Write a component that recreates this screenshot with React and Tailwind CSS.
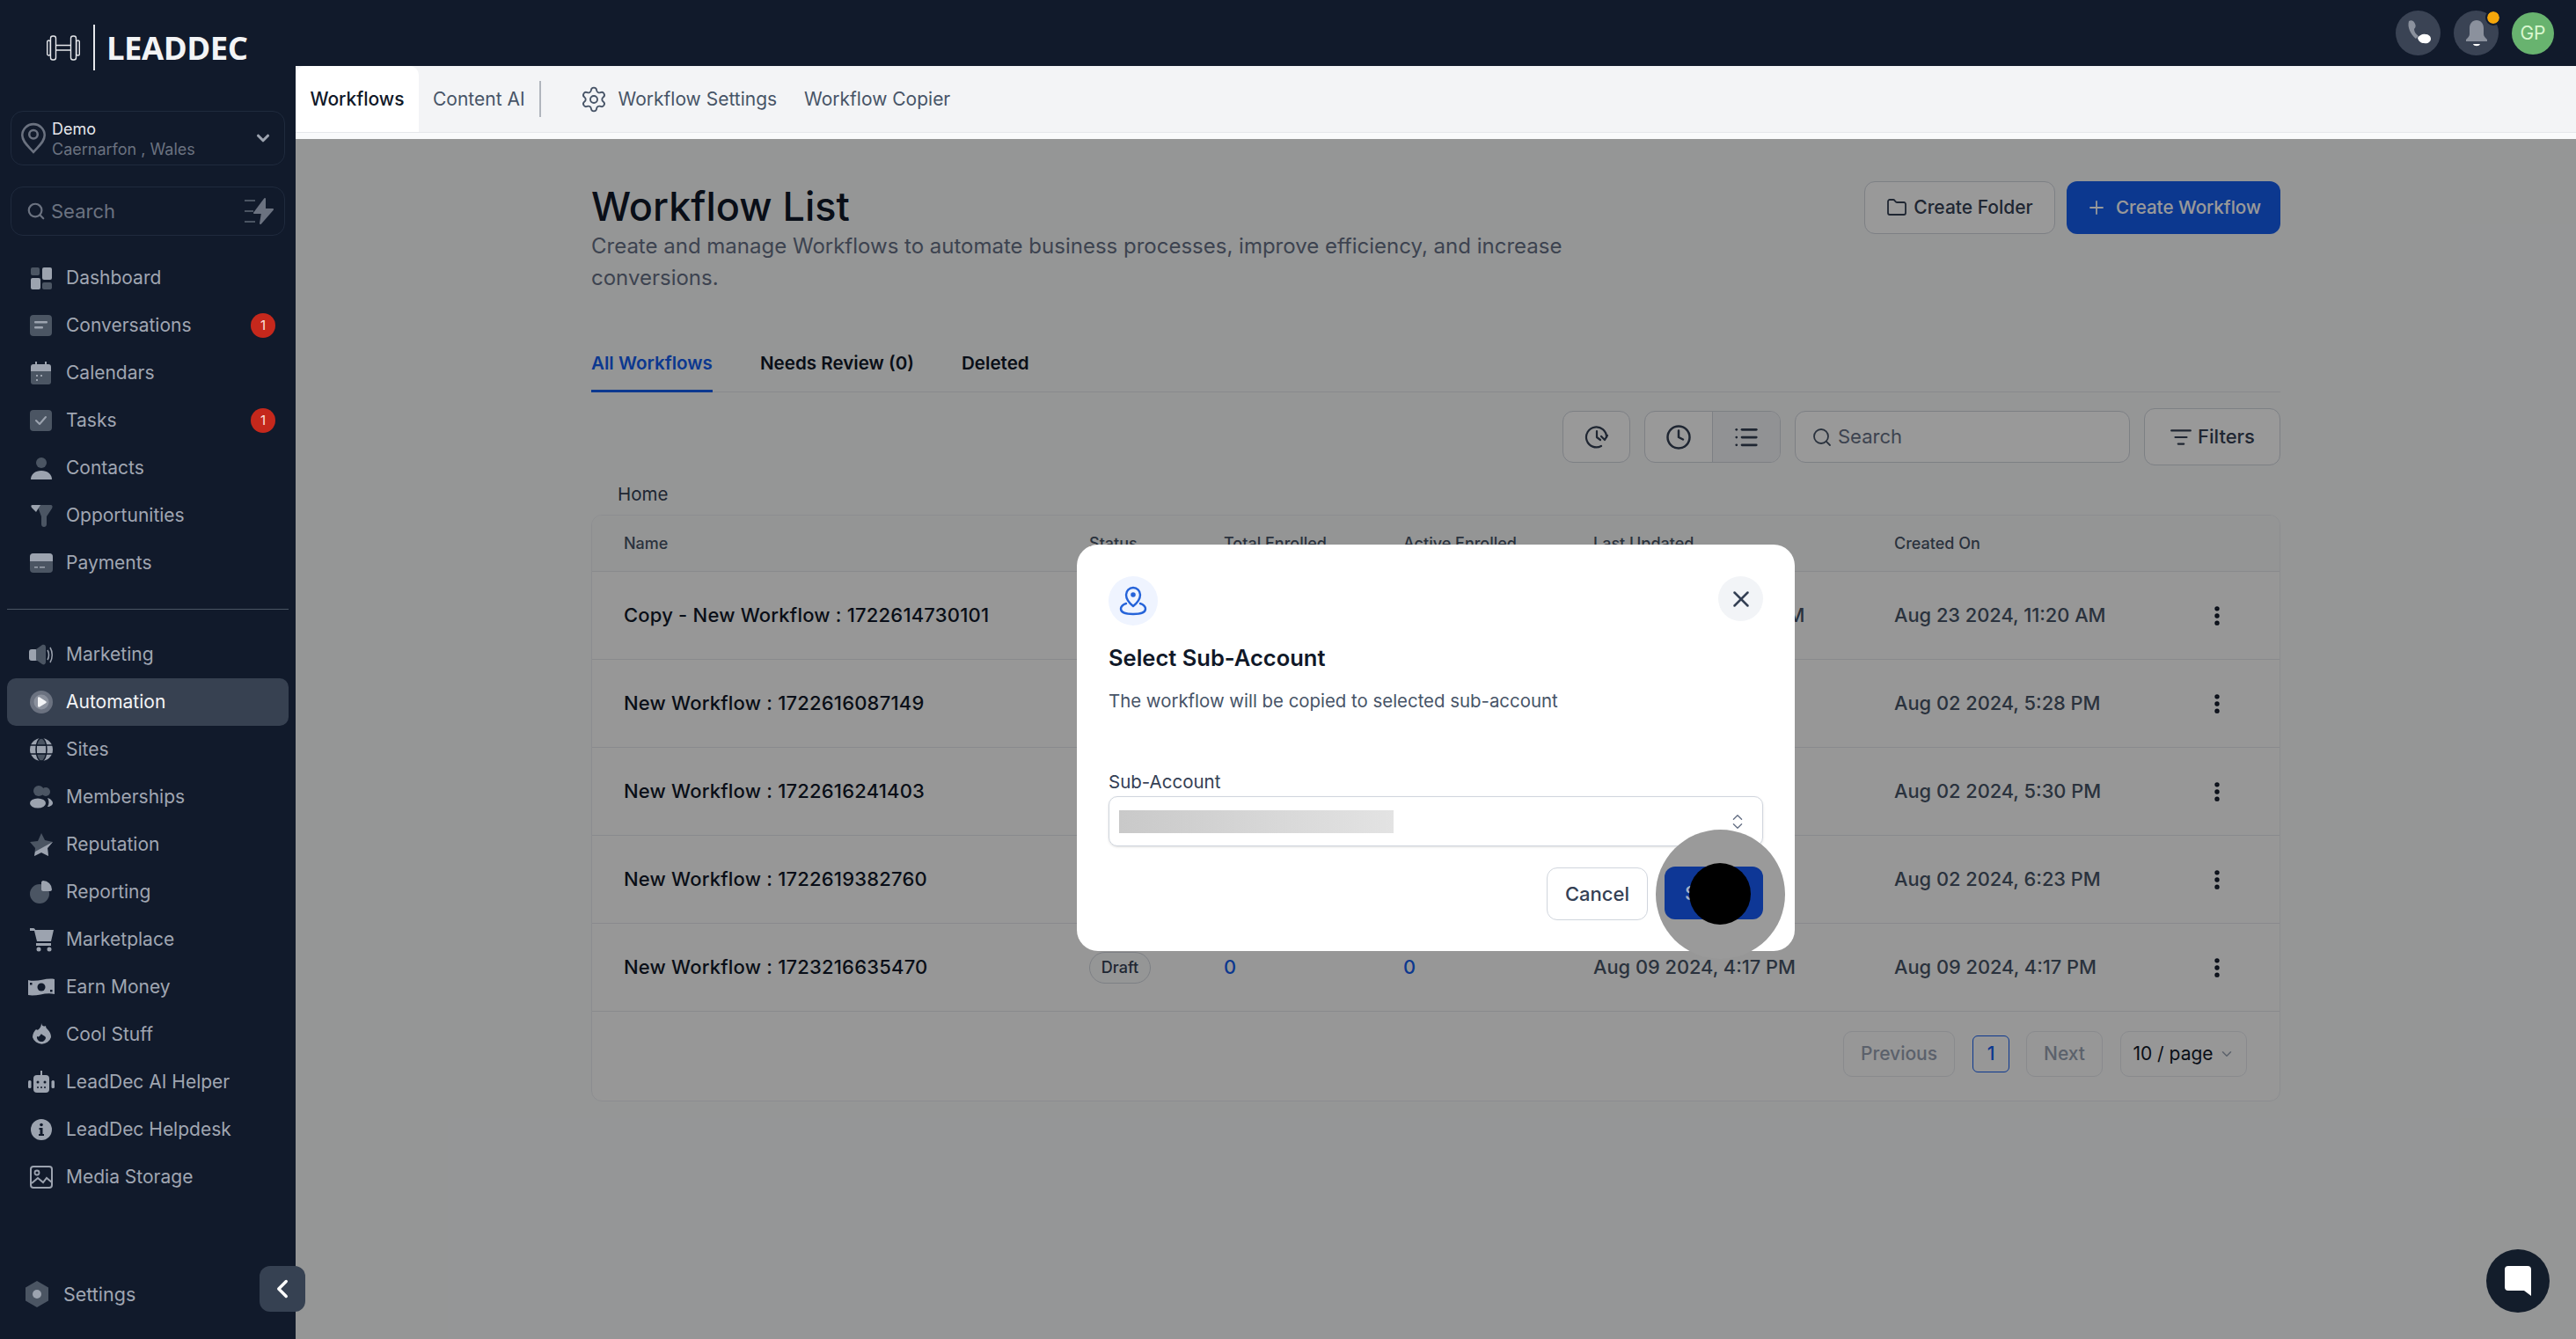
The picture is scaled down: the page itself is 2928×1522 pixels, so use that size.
import React from 'react'
import {
  ChevronDown,
  ChevronLeft,
  ChevronsUpDown,
  Clock,
  EllipsisVertical,
  Folder,
  List,
  ListFilter,
  Plus,
  Search,
  Settings,
  X,
} from 'lucide-react'

const L = '#9ca3af'
const D = '#4b5563'
const BG = '#111a2b'

const Svg = ({ children }) => (
  <svg width="26" height="26" viewBox="0 0 26 26" className="shrink-0 overflow-visible">
    {children}
  </svg>
)

const icons = {
  dashboard: (
    <Svg>
      <rect x="1" y="1" width="10" height="9" rx="2" fill={D} />
      <rect x="14" y="1" width="11" height="14" rx="2" fill={L} />
      <rect x="1" y="13" width="11" height="13" rx="2" fill={L} />
      <rect x="14" y="18" width="11" height="8" rx="2" fill={D} />
    </Svg>
  ),
  conversations: (
    <Svg>
      <rect x="0" y="1" width="25" height="24" rx="4" fill={D} />
      <rect x="5" y="8" width="15" height="2.5" rx="1" fill={L} />
      <rect x="5" y="14" width="10" height="2.5" rx="1" fill={L} />
    </Svg>
  ),
  calendars: (
    <Svg>
      <rect x="1" y="8" width="23" height="18" rx="3" fill={D} />
      <path d="M1 11V6a3 3 0 0 1 3-3h2V0h2v3h9V0h2v3h2a3 3 0 0 1 3 3v5z" fill={L} />
      <rect x="7" y="15" width="2" height="2" fill={L} />
      <rect x="12" y="15" width="2" height="2" fill={L} />
      <rect x="7" y="20" width="2" height="2" fill={L} />
    </Svg>
  ),
  tasks: (
    <Svg>
      <rect x="0" y="1" width="25" height="24" rx="4" fill={D} />
      <path d="M7 13l4 4 7-8" fill="none" stroke={L} strokeWidth="2" strokeLinecap="round" strokeLinejoin="round" />
    </Svg>
  ),
  contacts: (
    <Svg>
      <circle cx="13" cy="7" r="6" fill={D} />
      <path d="M1 26c0-6 5-10 12-10s12 4 12 10z" fill={L} />
    </Svg>
  ),
  opportunities: (
    <Svg>
      <path d="M8 1h15c3 0 3 2 2 4l-6 9v9c0 4-6 4-6 0v-9z" fill={D} />
      <path d="M3 1h9L7 9 2 4C1 2 1 1 3 1z" fill={L} />
    </Svg>
  ),
  payments: (
    <Svg>
      <rect x="0" y="2" width="26" height="22" rx="4" fill={D} />
      <path d="M0 11V6a4 4 0 0 1 4-4h18a4 4 0 0 1 4 4v5z" fill={L} />
      <rect x="5" y="17" width="4" height="1.5" fill={L} />
      <rect x="11" y="17" width="6" height="1.5" fill={L} />
    </Svg>
  ),
  marketing: (
    <Svg>
      <rect x="-1" y="7" width="10" height="13" rx="3" fill={L} />
      <path d="M7 7l7-5c3-1 4 1 4 3v16c0 3-2 4-4 3l-7-5z" fill={D} />
      <path d="M20 8c2 3 2 8 0 11M23 5c3 5 3 12 0 17" fill="none" stroke={L} strokeWidth="1.5" />
    </Svg>
  ),
  automation: (
    <Svg>
      <circle cx="13" cy="13" r="13" fill="#6b7280" />
      <circle cx="13" cy="13" r="8.5" fill="#8b919d" />
      <path d="M9 8.5c0-1 1-1.500 2-1l7 4.500c1 .6 1 1.600 0 2.200l-7 4.300c-1 .5-2 0-2-1z" fill="#f3f4f6" />
    </Svg>
  ),
  sites: (
    <Svg>
      <circle cx="13" cy="13" r="13" fill={L} />
      <ellipse cx="13" cy="13" rx="6" ry="13" fill={D} stroke={BG} strokeWidth="1.5" />
      <path d="M0 8h26M0 18h26" stroke={BG} strokeWidth="1.5" />
      <rect x="8" y="9" width="10" height="8" fill={L} />
    </Svg>
  ),
  memberships: (
    <Svg>
      <circle cx="18" cy="7" r="5" fill={D} />
      <circle cx="10" cy="6" r="6" fill={D} />
      <path d="M20 14c4 1 6 4 6 6s-3 4-6 4c2-3 2-7 0-10z" fill={L} />
      <ellipse cx="9" cy="20" rx="9" ry="5.5" fill={L} />
    </Svg>
  ),
  reputation: (
    <Svg>
      <path d="M13 0l4 8 9 2-6 7 1 9-8-4-8 4 1-9-6-7 9-1z" fill={D} />
      <path d="M26 10l-6 7 1 9-8-4-8 4 1-5z" fill={L} />
    </Svg>
  ),
  reporting: (
    <Svg>
      <circle cx="11" cy="15" r="11" fill={D} />
      <path d="M15 0a10 10 0 0 1 10 10c0 1-1 2-2 2h-8c-1 0-2-1-2-2V2c0-1 1-2 2-2z" fill={L} />
    </Svg>
  ),
  marketplace: (
    <Svg>
      <path d="M0 0h4c1 0 2 1 2 2h21l-3 13H8L5 3H0z" fill={L} />
      <path d="M7 17h17v3H7z" fill={L} />
      <circle cx="10" cy="24" r="2.5" fill={L} />
      <circle cx="22" cy="24" r="2.5" fill={L} />
    </Svg>
  ),
  money: (
    <Svg>
      <path d="M-2 5c10 3 20-3 30-1v17c-10-3-20 3-30 1z" fill={L} />
      <circle cx="13" cy="13" r="4.5" fill={BG} />
      <rect x="0" y="8" width="2.5" height="2.5" fill={BG} />
      <rect x="23" y="16" width="2.5" height="2.5" fill={BG} />
    </Svg>
  ),
  cool: (
    <Svg>
      <path d="M13 0c1 4 3 4 5 3 0 2 1 3 2 4 3 3 4 6 4 9a11 11 0 0 1-21 0c0-4 2-7 4-9 1 1 2 1 3 0 2-2 3-4 3-7z" fill={L} />
      <path d="M8 15c2 1 3 0 5-3 1 2 5 2 5 5a5 5 0 0 1-10-2z" fill={BG} />
    </Svg>
  ),
  robot: (
    <Svg>
      <rect x="4" y="5" width="18" height="20" rx="4" fill={L} />
      <rect x="12" y="0" width="2" height="6" fill={L} />
      <rect x="-2" y="11" width="3.5" height="9" rx="1.5" fill={L} />
      <rect x="24.5" y="11" width="3.5" height="9" rx="1.5" fill={L} />
      <circle cx="9" cy="13" r="1.5" fill={BG} />
      <circle cx="17" cy="13" r="1.5" fill={BG} />
      <path d="M8 19h10" stroke={BG} strokeWidth="1.5" strokeDasharray="2 2" />
    </Svg>
  ),
  info: (
    <Svg>
      <circle cx="13" cy="13" r="12" fill={L} />
      <circle cx="13" cy="7.5" r="1.8" fill={BG} />
      <path d="M10.500 11h4v7h1.500v2h-6v-2h1.500v-5h-1z" fill={BG} />
    </Svg>
  ),
  media: (
    <Svg>
      <rect x="1" y="1" width="24" height="24" rx="3" fill="none" stroke={L} strokeWidth="2" />
      <circle cx="8" cy="8" r="2.5" fill="none" stroke={L} strokeWidth="1.8" />
      <path d="M2 20l7-6 6 5 4-5 6 5" fill="none" stroke={L} strokeWidth="2" />
    </Svg>
  ),
}

const navTop = [
  ['Dashboard', 'dashboard'],
  ['Conversations', 'conversations', 1],
  ['Calendars', 'calendars'],
  ['Tasks', 'tasks', 1],
  ['Contacts', 'contacts'],
  ['Opportunities', 'opportunities'],
  ['Payments', 'payments'],
]

const navBottom = [
  ['Marketing', 'marketing'],
  ['Automation', 'automation'],
  ['Sites', 'sites'],
  ['Memberships', 'memberships'],
  ['Reputation', 'reputation'],
  ['Reporting', 'reporting'],
  ['Marketplace', 'marketplace'],
  ['Earn Money', 'money'],
  ['Cool Stuff', 'cool'],
  ['LeadDec AI Helper', 'robot'],
  ['LeadDec Helpdesk', 'info'],
  ['Media Storage', 'media'],
]

// rows 1-4 sit mostly behind the modal, only what shows is filled in
const workflows = [
  { name: 'Copy - New Workflow : 1722614730101', created: 'Aug 23 2024, 11:20 AM', updated: 'Aug 23 2024, 11:20 AM' },
  { name: 'New Workflow : 1722616087149', created: 'Aug 02 2024, 5:28 PM' },
  { name: 'New Workflow : 1722616241403', created: 'Aug 02 2024, 5:30 PM' },
  { name: 'New Workflow : 1722619382760', created: 'Aug 02 2024, 6:23 PM' },
  { name: 'New Workflow : 1723216635470', created: 'Aug 09 2024, 4:17 PM', updated: 'Aug 09 2024, 4:17 PM', draft: true },
]

const tableCols = 'grid grid-cols-[529px_153px_204px_216px_342px_337px_1fr] pl-[36px]'

const NavRow = ({ label, icon, badge }) => {
  const active = label === 'Automation'
  return (
    <div
      className={`mx-2 flex h-[54px] items-center rounded-[10px] pl-[26px] pr-[15px] text-[21px] ${
        active ? 'bg-[#374151] text-[#f3f4f6]' : 'text-[#a0a6b2]'
      }`}
    >
      {icons[icon]}
      <span className="ml-[15px]">{label}</span>
      {badge && (
        <span className="ml-auto flex h-[28px] w-[28px] items-center justify-center rounded-full bg-[#c5281c] text-[15px] text-[#fde2de]">
          {badge}
        </span>
      )}
    </div>
  )
}

const Sidebar = () => (
  <div className="flex h-full w-[336px] shrink-0 flex-col bg-[#111a2b]">
    <div className="flex h-[126px] shrink-0 items-start pl-[53px] pt-[28px]">
      <svg width="38" height="52" viewBox="0 0 38 52" fill="none" stroke="#e5e7eb" strokeWidth="1.4" className="shrink-0">
        <rect x="0.7" y="18" width="3.6" height="17" rx="1.8" />
        <rect x="4.5" y="13" width="6" height="27" rx="2.5" />
        <rect x="27.5" y="13" width="6" height="27" rx="2.5" />
        <rect x="33.7" y="18" width="3.6" height="17" rx="1.8" />
        <path d="M10.5 23.5h17M10.5 29h17" />
      </svg>
      <div className="ml-[15px] h-[52px] w-[2px] bg-[#e5e7eb]" />
      <span className="ml-[13px] [font-family:'Open_Sans',sans-serif] text-[36.5px] font-bold leading-[52px] tracking-[-0.5px] text-[#f3f4f6]">
        LEADDEC
      </span>
    </div>
    <div className="mx-3 flex h-[62px] shrink-0 items-center rounded-[14px] border border-[#1f2a3d] pl-[10px] pr-[13px]">
      <svg width="30" height="36" viewBox="0 0 28 34" fill="none" stroke="#6b7280" strokeWidth="2.4" className="shrink-0">
        <path d="M14 32C9 26 2 21 2 14a12 12 0 0 1 24 0c0 7-7 12-12 18z" />
        <circle cx="14" cy="13" r="4.5" />
      </svg>
      <div className="ml-[6px] flex flex-col pt-[2px] text-[18px] leading-[23px]">
        <span className="text-[#e5e7eb]">Demo</span>
        <span className="text-[#6b7280]">Caernarfon , Wales</span>
      </div>
      <ChevronDown size={22} strokeWidth={3.4} className="ml-auto text-[#9ca3af]" />
    </div>
    <div className="mx-3 mt-[24px] flex h-[56px] shrink-0 items-center rounded-[14px] border border-[#1f2a3d] pl-[17px] pr-[11px]">
      <Search size={22} strokeWidth={2.4} className="text-[#6b7280]" />
      <span className="ml-[6px] text-[22px] text-[#6b7280]">Search</span>
      <svg width="34" height="30" viewBox="0 0 34 30" className="ml-auto shrink-0">
        <path d="M0 3h12M0 15h10M0 27h12" stroke="#4b5563" strokeWidth="1.8" />
        <path d="M23 1L11 17h9l-2 12 14-16h-9z" fill="#6b7280" stroke="#6b7280" strokeLinejoin="round" strokeWidth="2" />
      </svg>
    </div>
    <div className="mt-[21px] flex flex-col">
      {navTop.map(([label, icon, badge]) => (
        <NavRow key={label} label={label} icon={icon} badge={badge} />
      ))}
    </div>
    <div className="mx-2 mb-[24px] mt-[25px] h-px shrink-0 bg-[#4b5563]" />
    <div className="flex flex-col">
      {navBottom.map(([label, icon]) => (
        <NavRow key={label} label={label} icon={icon} />
      ))}
    </div>
    <div className="mb-[24px] mt-auto flex h-[54px] shrink-0 items-center pl-[28px] text-[21.5px] text-[#a0a6b2]">
      <svg width="28" height="30" viewBox="0 0 28 30" className="shrink-0">
        <path d="M14 0l13 7.500v15L14 30 1 22.500v-15z" fill={D} />
        <circle cx="14" cy="15" r="5" fill={L} />
      </svg>
      <span className="ml-[16px]">Settings</span>
    </div>
  </div>
)

const TopBar = () => (
  <div className="flex h-[75px] shrink-0 items-center justify-end bg-[#111a2b] pr-[25px]">
    <div className="flex h-[51px] w-[51px] items-center justify-center rounded-full bg-[#3a4354]">
      <svg width="32" height="32" viewBox="0 0 32 32">
        <path d="M5 2c3-2 6 0 7 3 1 2 1 4-1 6 0 3 2 6 5 8l-3 3C7 17 3 9 5 2z" fill="#8b919d" />
        <path d="M15 21c2-3 6-5 9-4 3 0 6 2 6 5 0 4-4 6-8 5-3 0-6-2-7-6z" fill="#ffffff" />
      </svg>
    </div>
    <div className="relative ml-[15px] flex h-[51px] w-[51px] items-center justify-center rounded-full bg-[#3a4354]">
      <svg width="26" height="32" viewBox="0 0 26 32">
        <path d="M13 1c5 0 8 4 8 9v7c0 2 2 4 4 6v2H1v-2c2-2 4-4 4-6v-7c0-5 3-9 8-9z" fill="#8b919d" />
        <path d="M9 28h8c-1 3-7 3-8 0z" fill="#ffffff" />
      </svg>
      <span className="absolute right-[-1px] top-[1px] h-[14px] w-[14px] rounded-full bg-[#f5a70b] outline-2 outline-[#111a2b]" />
    </div>
    <div className="ml-[15px] flex h-[48px] w-[48px] items-center justify-center rounded-full bg-[#68b36f] text-[21px] text-[#d9f7d0]">
      GP
    </div>
  </div>
)

const SubNav = () => (
  <div className="flex h-[83px] shrink-0 flex-col bg-[#f9fafb]">
    <div className="flex h-[76px] items-center border-b border-[#e5e7eb] bg-[#f3f4f6] text-[21px] text-[#475467]">
      <div className="flex h-full w-[140px] items-center justify-center rounded-t-[10px] bg-white font-medium text-[#101828]">
        Workflows
      </div>
      <span className="ml-[16px]">Content AI</span>
      <div className="ml-[16px] h-[41px] w-[2px] bg-[#b0b5bd]" />
      <Settings size={32} strokeWidth={1.4} className="ml-[44px]" />
      <span className="ml-[12px]">Workflow Settings</span>
      <span className="ml-[31px]">Workflow Copier</span>
    </div>
  </div>
)

const Toolbar = () => (
  <div className="mt-[18px] flex items-center justify-end gap-[16px]">
    <button className="flex h-[59px] w-[77px] items-center justify-center rounded-[12px] border border-[#d0d5dd] bg-white text-[#344054]">
      <svg width="28" height="28" viewBox="0 0 28 28" fill="none" stroke="currentColor" strokeWidth="2.2" strokeLinecap="round" strokeLinejoin="round">
        <path d="M25 14A11.500 11.500 0 1 0 19 24" />
        <path d="M14 7v7l4 3" />
        <path d="M21 15l4 4 3-5" transform="translate(-2 -2)" />
      </svg>
    </button>
    <div className="flex h-[59px] w-[155px] overflow-hidden rounded-[12px] border border-[#d0d5dd] bg-white text-[#344054]">
      <div className="flex w-[77px] items-center justify-center border-r border-[#d0d5dd]">
        <Clock size={30} strokeWidth={2} />
      </div>
      <div className="flex flex-1 items-center justify-center bg-[#f2f4f7]">
        <List size={30} strokeWidth={2.2} />
      </div>
    </div>
    <div className="flex h-[59px] w-[381px] items-center rounded-[12px] border border-[#d0d5dd] bg-white pl-[18px] text-[22px] text-[#667085]">
      <Search size={24} strokeWidth={1.8} className="text-[#475467]" />
      <span className="ml-[6px]">Search</span>
    </div>
    <button className="flex h-[65px] w-[155px] items-center justify-center gap-[6px] rounded-[12px] border border-[#d0d5dd] bg-white text-[22px] font-medium text-[#344054]">
      <ListFilter size={26} strokeWidth={2} />
      Filters
    </button>
  </div>
)

const Table = () => (
  <div className="mt-[8px] h-[667px] overflow-hidden rounded-[12px] border border-[#eaecf0] bg-[#fcfcfc]">
    <div className={`${tableCols} h-[64px] items-center border-b border-[#e4e7ec] bg-[#f7f8f9] text-[18px] font-medium text-[#475467]`}>
      <span>Name</span>
      <span>Status</span>
      <span>Total Enrolled</span>
      <span>Active Enrolled</span>
      <span>Last Updated</span>
      <span>Created On</span>
    </div>
    {workflows.map((row) => (
      <div key={row.name} className={`${tableCols} h-[100px] items-center border-b border-[#e4e7ec] text-[21.8px] font-medium text-[#475467]`}>
        <span className="text-[22px] tracking-[0.2px] text-[#101828]">{row.name}</span>
        <span>
          {row.draft && (
            <span className="flex h-[36px] w-[70px] items-center justify-center rounded-full border border-[#d0d5dd] bg-[#f9fafb] text-[18px] text-[#344054]">
              Draft
            </span>
          )}
        </span>
        <span className="text-[#155eef]">{row.draft ? 0 : ''}</span>
        <span className="text-[#155eef]">{row.draft ? 0 : ''}</span>
        <span>{row.updated}</span>
        <span>{row.created}</span>
        <EllipsisVertical size={28} strokeWidth={2.6} className="ml-[16px] text-[#101828]" />
      </div>
    ))}
    <div className="flex items-center justify-end pr-[37px] pt-[22px] text-[21px] font-medium">
      <div className="flex h-[52px] w-[127px] items-center justify-center rounded-[10px] border border-[#e4e7ec] text-[#98a2b3]">
        Previous
      </div>
      <div className="ml-[20px] flex h-[42px] w-[42px] items-center justify-center rounded-[6px] border border-[#155eef] text-[#155eef]">
        1
      </div>
      <div className="ml-[19px] flex h-[52px] w-[87px] items-center justify-center rounded-[10px] border border-[#e4e7ec] text-[#98a2b3]">
        Next
      </div>
      <div className="ml-[20px] flex h-[52px] w-[144px] items-center justify-center gap-[6px] rounded-[10px] border border-[#e4e7ec] font-normal text-[#101828]">
        10 / page
        <ChevronDown size={18} className="text-[#98a2b3]" />
      </div>
    </div>
  </div>
)

const Modal = () => (
  <div className="absolute inset-0 flex justify-center bg-black/40 pt-[461px]">
    <div className="relative h-[462px] w-[816px] rounded-[24px] bg-white px-[36px] pt-[36px]">
      <div className="flex items-start justify-between">
        <div className="flex h-[56px] w-[56px] items-center justify-center rounded-full bg-[#eff4ff]">
          <svg width="32" height="34" viewBox="0 0 32 34" fill="none" stroke="#2563d9" strokeWidth="2.4" strokeLinecap="round" strokeLinejoin="round">
            <path d="M16 23c-5-4-8-8-8-13a8 8 0 0 1 16 0c0 5-3 9-8 13z" />
            <circle cx="16" cy="10" r="1.600" fill="#2563d9" />
            <path d="M8 20c-4 1-6 4-6 6 0 4 6 6 14 6s14-2 14-6c0-2-2-5-6-6" />
          </svg>
        </div>
        <div className="flex h-[51px] w-[51px] items-center justify-center rounded-full bg-[#f2f4f7]">
          <X size={30} strokeWidth={2} className="text-[#344054]" />
        </div>
      </div>
      <div className="mt-[20px] text-[25.5px] font-semibold leading-[34px] text-[#101828]">Select Sub-Account</div>
      <div className="mt-[16px] text-[20.4px] leading-[32px] text-[#475467]">The workflow will be copied to selected sub-account</div>
      <div className="mt-[61px] text-[20.5px] leading-[30px] text-[#344054]">Sub-Account</div>
      <div className="mt-[1px] flex h-[57px] items-center justify-between rounded-[10px] border border-[#d0d5dd] pl-[11px] pr-[17px] shadow-sm">
        <div className="h-[26px] w-[312px] bg-linear-to-r from-[#c9c9c9] to-[#e3e3e3]" />
        <ChevronsUpDown size={22} strokeWidth={1.5} className="text-[#667085]" />
      </div>
      <div className="mt-[24px] flex justify-end gap-[19px]">
        <button className="flex h-[60px] w-[115px] items-center justify-center rounded-[12px] border border-[#d0d5dd] bg-white text-[22px] font-medium text-[#344054]">
          Cancel
        </button>
        <div className="h-[60px] w-[112px]" />
      </div>
      <div className="absolute left-[658px] top-[324px] h-[147px] w-[147px] rounded-full bg-[#9a9a9a]" />
      <button className="absolute left-[668px] top-[366px] flex h-[60px] w-[112px] items-center justify-center rounded-[12px] bg-[#0e3796] text-[22px] font-medium text-[#a9b2c8]">
        Select
      </button>
      <div className="absolute left-[696px] top-[362px] h-[70px] w-[70px] rounded-full bg-black" />
    </div>
  </div>
)

const App = () => (
  <div className="relative flex h-[1522px] w-full overflow-hidden bg-[#f9fafb] [font-family:Inter,sans-serif]">
    <Sidebar />
    <div className="flex min-w-0 flex-1 flex-col">
      <TopBar />
      <SubNav />
      <div className="relative flex-1">
        <div className="mx-auto w-[1920px] pt-[48px]">
          <div className="flex items-start justify-between">
            <div>
              <h1 className="text-[45px] font-medium leading-[58px] text-[#101828]">Workflow List</h1>
              <p className="-mt-[2px] w-[1120px] text-[24px] leading-[36px] text-[#667085]">
                Create and manage Workflows to automate business processes, improve efficiency, and increase conversions.
              </p>
            </div>
            <div className="flex gap-[13px]">
              <button className="flex h-[60px] w-[217px] items-center justify-center gap-[7px] rounded-[12px] border border-[#d0d5dd] bg-white text-[21px] font-medium text-[#344054]">
                <Folder size={24} strokeWidth={1.8} />
                Create Folder
              </button>
              <button className="flex h-[60px] w-[243px] items-center justify-center gap-[10px] rounded-[12px] bg-[#155eef] text-[20.6px] font-medium text-white">
                <Plus size={24} strokeWidth={1.8} />
                Create Workflow
              </button>
            </div>
          </div>
          <div className="mt-[64px] flex gap-[54px] border-b border-[#e4e7ec] text-[20.6px] font-semibold leading-[30px] text-[#101828]">
            <div className="-mb-px border-b-[3px] border-[#155eef] pb-[15px] text-[#155eef]">All Workflows</div>
            <div className="pb-[15px]">Needs Review (0)</div>
            <div className="pb-[15px]">Deleted</div>
          </div>
          <Toolbar />
          <div className="mt-[18px] pl-[30px] text-[20.5px] leading-[30px] text-[#344054]">Home</div>
          <Table />
        </div>
        <Modal />
      </div>
    </div>
    <div className="absolute left-[295px] top-[1439px] flex h-[52px] w-[52px] items-center justify-center rounded-[12px] bg-[#364152]">
      <ChevronLeft size={34} strokeWidth={2.4} className="text-white" />
    </div>
    <div className="absolute left-[2826px] top-[1420px] flex h-[72px] w-[72px] items-center justify-center rounded-full bg-[#131d2b]">
      <svg width="32" height="36" viewBox="0 0 32 36">
        <path d="M5 1h22a4 4 0 0 1 4 4v30l-8-6H5a4 4 0 0 1-4-4V5a4 4 0 0 1 4-4z" fill="#ffffff" />
      </svg>
    </div>
  </div>
)

export default App
